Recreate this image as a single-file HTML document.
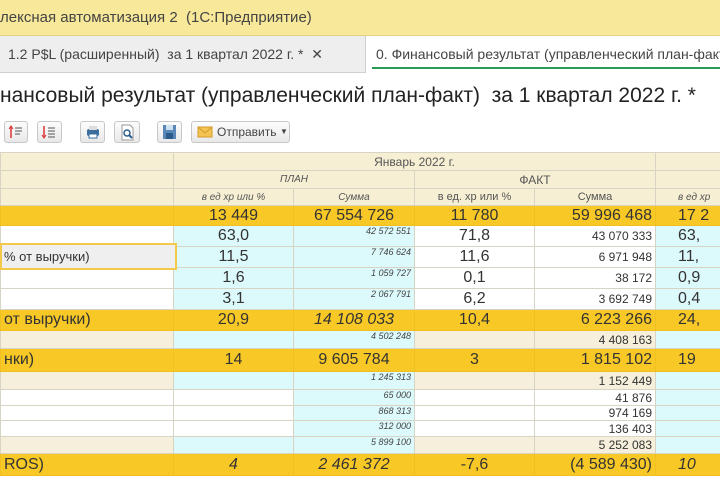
<!DOCTYPE html>
<html><head><meta charset="utf-8"><style>
*{margin:0;padding:0;box-sizing:border-box}
body{width:720px;height:480px;overflow:hidden;background:#fff;font-family:"Liberation Sans","DejaVu Sans",sans-serif;position:relative;color:#333}
.top{position:absolute;left:0;top:0;width:720px;height:36px;background:#f8e89a;border-bottom:1px solid #e0d08a;font-size:15px;line-height:36px;color:#444}
.tabs{position:absolute;left:0;top:36px;width:720px;height:37px;background:#eeeeee;border-bottom:1px solid #d0d0d0}
.tab1{position:absolute;left:8px;top:0;line-height:37px;font-size:14px;color:#444;white-space:nowrap}
.tab2{position:absolute;left:365px;top:0;width:360px;height:37px;background:#fff;border-left:1px solid #d0d0d0;font-size:14px;line-height:37px;padding-left:10px;color:#444;white-space:nowrap;overflow:hidden}
.tab2:after{content:"";position:absolute;left:6px;right:0;top:31px;height:2px;background:#2a9b55}
.title{position:absolute;left:0;top:84px;font-size:21px;color:#222;white-space:nowrap}
.btn{position:absolute;top:121px;height:22px;border:1px solid #c8c8c8;border-radius:3px;background:linear-gradient(#fdfdfd,#e8e8e8)}
table{position:absolute;left:0;top:152px;border-collapse:collapse;table-layout:fixed;width:725px}
td{border:1px solid #d8d4c4;padding:0 3px;white-space:nowrap;overflow:hidden}
td:last-child{padding-left:22px;text-align:left!important}
.h{background:#f6efd3;color:#555;font-size:11px;text-align:center}
.y td{background:#f8c926;font-size:16px;color:#333;border-color:#f0c020}
.b{background:#dcf9fb}
.w{background:#fff}
.e{background:#f6efdc}
.c{text-align:center}
.r{text-align:right}
.s{font-size:9px;font-style:italic;text-align:right;vertical-align:top;color:#444}
.m{font-size:16px;text-align:center}
.f{font-size:12px;text-align:right}
.it{font-style:italic}
.sel{position:absolute;left:0;top:243px;width:177px;height:27px;border:2px solid #f2c94a;background:#efefef;font-size:13px;line-height:23px;padding-left:2px;color:#333}
</style></head><body>
<div class="top">лексная автоматизация 2&nbsp; (1С:Предприятие)</div>
<div class="tabs"><div class="tab1">1.2 P$L (расширенный)&nbsp; за 1 квартал 2022 г. * &nbsp;✕</div>
<div class="tab2">0. Финансовый результат (управленческий план-факт)</div></div>
<div class="title">нансовый результат (управленческий план-факт)&nbsp; за 1 квартал 2022 г. *</div>
<div class="btn" style="left:4px;width:24px"><svg width="22" height="20"><path d="M6 5v11" stroke="#d33" stroke-width="1.5"/><path d="M4 7l2-3 2 3" fill="none" stroke="#d33"/><path d="M10 6h7M10 9h7M10 12h5" stroke="#555"/></svg></div>
<div class="btn" style="left:37px;width:25px"><svg width="22" height="20"><path d="M6 4v11" stroke="#d33" stroke-width="1.5"/><path d="M4 13l2 3 2-3" fill="none" stroke="#d33"/><path d="M10 6h7M10 9h7M10 12h7M10 15h7" stroke="#555"/></svg></div>
<div class="btn" style="left:80px;width:25px"><svg width="24" height="20"><rect x="6" y="7" width="12" height="7" rx="2" fill="#3b6d9e"/><rect x="8" y="4" width="8" height="4" fill="#ddd"/><rect x="8" y="12" width="8" height="4" fill="#fff" stroke="#3b6d9e"/></svg></div>
<div class="btn" style="left:114px;width:26px"><svg width="24" height="20"><path d="M7 3h8l3 3v12H7z" fill="#fff" stroke="#999"/><circle cx="12" cy="11" r="3" fill="none" stroke="#2a5d8e" stroke-width="1.5"/><path d="M14 13l3 3" stroke="#2a5d8e" stroke-width="2"/></svg></div>
<div class="btn" style="left:157px;width:25px"><svg width="24" height="20"><rect x="5" y="3" width="13" height="14" fill="#5a86b8"/><rect x="8" y="3" width="7" height="5" fill="#cfe0f0"/><rect x="8" y="11" width="7" height="6" fill="#2d5a8a"/></svg></div>
<div class="btn" style="left:191px;width:99px;font-size:12px;line-height:20px;color:#444"><svg width="18" height="14" style="position:absolute;left:5px;top:4px"><rect x="1" y="1" width="14" height="10" fill="#f3c452" stroke="#d39a2a"/><path d="M1 1l7 6 7-6" fill="none" stroke="#d39a2a"/></svg><span style="position:absolute;left:25px">Отправить</span><span style="position:absolute;left:88px;font-size:8px">▼</span></div>
<table>
<colgroup><col style="width:173px"><col style="width:120px"><col style="width:121px"><col style="width:120px"><col style="width:121px"><col style="width:70px"></colgroup>
<tr class="h" style="height:18px"><td></td><td colspan="4" style="font-size:12px">Январь 2022 г.</td><td></td></tr>
<tr class="h" style="height:18px"><td></td><td colspan="2" class="it" style="font-size:10px">ПЛАН</td><td colspan="2" style="font-size:12px">ФАКТ</td><td></td></tr>
<tr class="h" style="height:17px"><td></td><td class="it" style="font-size:10px">в ед хр или %</td><td class="it" style="font-size:10px">Сумма</td><td>в ед. хр или %</td><td>Сумма</td><td class="it" style="font-size:10px">в ед хр</td></tr>
<tr class="y" style="height:20px"><td></td><td class="c">13 449</td><td class="c">67 554 726</td><td class="c">11 780</td><td class="r">59 996 468</td><td>17 2</td></tr>
<tr style="height:21px"><td class="w"></td><td class="b m">63,0</td><td class="b s">42 572 551</td><td class="w m">71,8</td><td class="w f">43 070 333</td><td class="b m">63,</td></tr>
<tr style="height:21px"><td class="w"></td><td class="b m">11,5</td><td class="b s">7 746 624</td><td class="w m">11,6</td><td class="w f">6 971 948</td><td class="b m">11,</td></tr>
<tr style="height:21px"><td class="w"></td><td class="b m">1,6</td><td class="b s">1 059 727</td><td class="w m">0,1</td><td class="w f">38 172</td><td class="b m">0,9</td></tr>
<tr style="height:21px"><td class="w"></td><td class="b m">3,1</td><td class="b s">2 067 791</td><td class="w m">6,2</td><td class="w f">3 692 749</td><td class="b m">0,4</td></tr>
<tr class="y" style="height:21px"><td>от выручки)</td><td class="c">20,9</td><td class="c it">14 108 033</td><td class="c">10,4</td><td class="r">6 223 266</td><td>24,</td></tr>
<tr style="height:18px"><td class="e"></td><td class="b"></td><td class="b s">4 502 248</td><td class="e"></td><td class="e f">4 408 163</td><td class="b"></td></tr>
<tr class="y" style="height:23px"><td>нки)</td><td class="c">14</td><td class="c">9 605 784</td><td class="c">3</td><td class="r">1 815 102</td><td>19</td></tr>
<tr style="height:18px"><td class="e"></td><td class="b"></td><td class="b s">1 245 313</td><td class="e"></td><td class="e f">1 152 449</td><td class="b"></td></tr>
<tr style="height:16px"><td class="w"></td><td class="w"></td><td class="b s">65 000</td><td class="w"></td><td class="w f">41 876</td><td class="b"></td></tr>
<tr style="height:15px"><td class="w"></td><td class="w"></td><td class="b s">868 313</td><td class="w"></td><td class="w f">974 169</td><td class="b"></td></tr>
<tr style="height:16px"><td class="w"></td><td class="w"></td><td class="b s">312 000</td><td class="w"></td><td class="w f">136 403</td><td class="b"></td></tr>
<tr style="height:17px"><td class="e"></td><td class="b"></td><td class="b s">5 899 100</td><td class="e"></td><td class="e f">5 252 083</td><td class="b"></td></tr>
<tr class="y" style="height:22px"><td style="padding-left:3px">ROS)</td><td class="c it">4</td><td class="c it">2 461 372</td><td class="c">-7,6</td><td class="r">(4 589 430)</td><td class="it">10</td></tr>
</table>
<div class="sel">% от выручки)</div>
</body></html>
